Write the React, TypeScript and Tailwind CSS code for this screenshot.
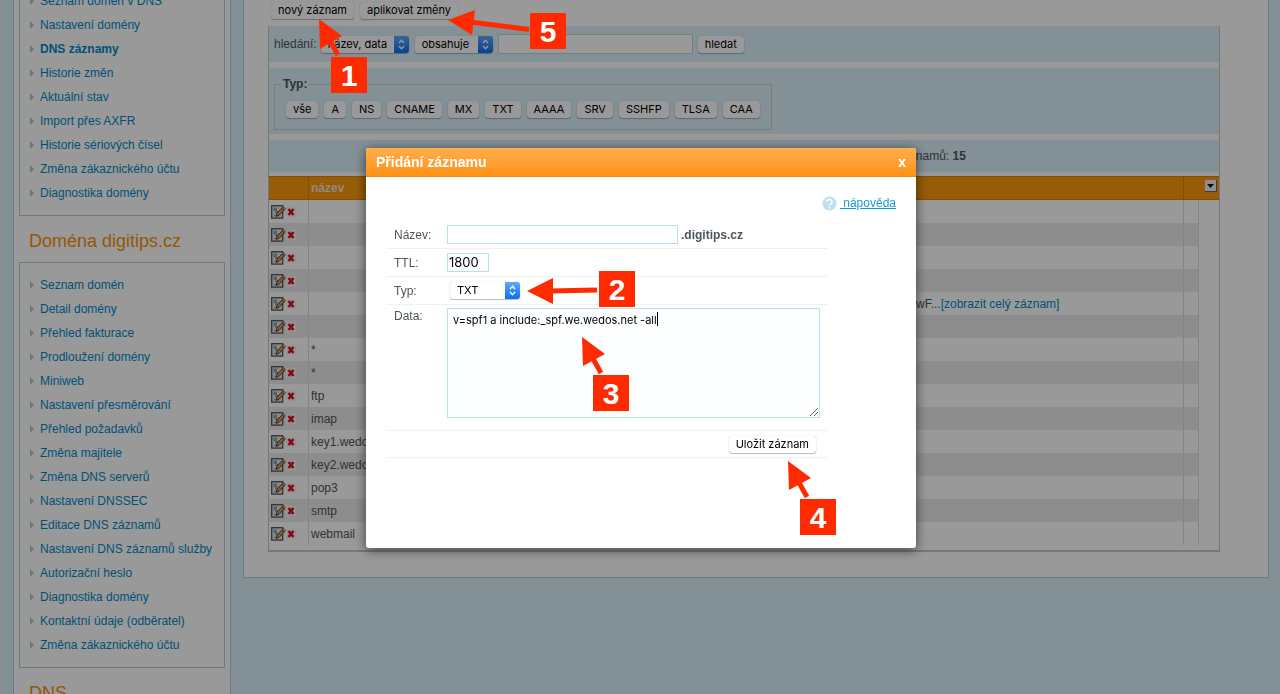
import type { ReactNode } from "react";

const dnsLinks = [
  "Seznam domén v DNS",
  "Nastavení domény",
  "DNS záznamy",
  "Historie změn",
  "Aktuální stav",
  "Import přes AXFR",
  "Historie sériových čísel",
  "Změna zákaznického účtu",
  "Diagnostika domény",
];

const domainLinks = [
  "Seznam domén",
  "Detail domény",
  "Přehled fakturace",
  "Prodloužení domény",
  "Miniweb",
  "Nastavení přesměrování",
  "Přehled požadavků",
  "Změna majitele",
  "Změna DNS serverů",
  "Nastavení DNSSEC",
  "Editace DNS záznamů",
  "Nastavení DNS záznamů služby",
  "Autorizační heslo",
  "Diagnostika domény",
  "Kontaktní údaje (odběratel)",
  "Změna zákaznického účtu",
];

const types = ["vše", "A", "NS", "CNAME", "MX", "TXT", "AAAA", "SRV", "SSHFP", "TLSA", "CAA"];

const records = ["", "", "", "", "", "", "*", "*", "ftp", "imap", "key1.wedos", "key2.wedos", "pop3", "smtp", "webmail"];

function Button({ children }: { children: ReactNode }) {
  return (
    <button className="h-[17px] rounded-[3px] bg-white px-[7px] font-['Inter',sans-serif] text-[11px] leading-[17px] whitespace-nowrap text-black shadow-[0_0_1px_rgba(0,0,0,0.3),0_1px_1px_rgba(0,0,0,0.25)]">
      {children}
    </button>
  );
}

function Select({ label, value, width }: { label: string; value: string; width: string }) {
  return (
    <span className={`relative inline-block h-[17px] ${width}`}>
      <select
        aria-label={label}
        className="block h-[17px] w-full appearance-none rounded-[3px] bg-white pl-[7px] font-['Inter',sans-serif] text-[11px] leading-[17px] text-black shadow-[0_0_1px_rgba(0,0,0,0.3),0_1px_1px_rgba(0,0,0,0.25)]"
      >
        <option>{value}</option>
      </select>
      <span className="pointer-events-none absolute inset-y-0 right-0 flex w-[15px] items-center justify-center rounded-r-[3px] bg-linear-to-b from-[#5aaaf8] to-[#0a6cf8]">
        <svg width="7" height="11" viewBox="0 0 7 11" fill="none" stroke="white" strokeWidth="1.3">
          <path d="M1 4l2.5-2.7L6 4M1 7l2.5 2.7L6 7" />
        </svg>
      </span>
    </span>
  );
}

function Menu({ items, active }: { items: string[]; active?: string }) {
  return (
    <ul className="border border-[#a9cfdf] py-[10px] pl-[10px]">
      {items.map((item) => (
        <li key={item} className="flex h-6 items-center gap-[6px]">
          <svg width="4" height="8" viewBox="0 0 4 8" fill="#a9c6d3">
            <path d="M0 0l4 4-4 4z" />
          </svg>
          <a href="#" className={item === active ? "font-bold text-[#0088c6]" : "text-[#0088c6]"}>
            {item}
          </a>
        </li>
      ))}
    </ul>
  );
}

function EditIcon() {
  return (
    <svg width="15" height="14" viewBox="0 0 15 14">
      <rect x="0.7" y="0.7" width="11" height="12.4" fill="#dfe4e6" stroke="#555" strokeWidth="1.3" />
      <path d="M2.500 2.500h3.500v3.500h2v2h-4v-2h-1.500z" fill="#8fa3ad" />
      <path d="M3 10.500h3" stroke="#9aa" />
      <path d="M5 11.500l1-3.500 5-5 2.200 2-5 5.200z" fill="#d09a5c" stroke="#4f3826" strokeWidth="0.9" />
      <path d="M10.800 3l2.400 2.200 1.300-1.600-2.200-2z" fill="#c99880" stroke="#5a4030" strokeWidth="0.6" />
    </svg>
  );
}

function DeleteIcon() {
  return (
    <svg width="10" height="10" viewBox="0 0 10 10">
      <rect width="10" height="10" fill="#fff5f0" />
      <path d="M2.500 2l5 6M7.500 2l-5 6" stroke="#cf1030" strokeWidth="2.600" />
    </svg>
  );
}

function Records() {
  return (
    <table className="w-full table-fixed border-separate border-spacing-0">
      <colgroup>
        <col className="w-[40px]" />
        <col />
        <col className="w-[268px]" />
        <col className="w-[15px]" />
        <col className="w-[20px]" />
      </colgroup>
      <thead>
        <tr className="h-6 bg-[#fa9a0e] text-left text-[12px] text-[#f5e6cf]">
          <th className="border-r border-y border-[#d98307]" aria-label="akce" />
          <th className="border-y border-[#d98307] px-[2px] leading-[22px]">název</th>
          <th className="border-r border-y border-[#d98307]" aria-label="data" />
          <th colSpan={2} className="border-y border-[#d98307] pr-[2px]">
            <button
              aria-label="sloupce"
              className="mb-1 ml-auto flex size-3 items-center justify-center border-r border-b border-[#666] bg-[#f0f0f0]"
            >
              <svg width="7" height="4" viewBox="0 0 7 4">
                <path d="M0 0h7L3.500 4z" fill="#000" />
              </svg>
            </button>
          </th>
        </tr>
      </thead>
      <tbody>
        {records.map((name, i) => (
          <tr key={i} className={i % 2 ? "h-[23px] bg-[#ececec]" : "h-[23px]"}>
            <td className="border-r border-[#dcdcdc] pl-[2px]">
              <div className="flex items-center">
                <EditIcon />
                <DeleteIcon />
              </div>
            </td>
            <td className="px-[2px] leading-[22px]">{name}</td>
            <td className="border-r border-[#dcdcdc] leading-[22px]">
              {i === 4 && (
                <>
                  wF...
                  <a href="#" className="text-[#0088c6]">
                    [zobrazit celý záznam]
                  </a>
                </>
              )}
            </td>
            <td className="border-r border-[#dcdcdc]" />
            <td className="bg-white" />
          </tr>
        ))}
      </tbody>
    </table>
  );
}

function AddRecord() {
  const field = "border border-[#b9dfe9] bg-[#fcfeff] text-black";
  const row = "flex border-b border-[#f0f0f0] pl-2";
  return (
    <div role="dialog" aria-labelledby="dialog-title" className="min-h-[400px] w-[550px] rounded-[3px] bg-white shadow-[0_2px_12px_rgba(0,0,0,0.6)]">
      <div className="flex h-[29px] items-center justify-between rounded-t-[3px] border-b border-[#e58a1c] bg-linear-to-b from-[#ffae4a] to-[#ff9210] px-[10px] text-[14px] font-bold text-white">
        <h2 id="dialog-title">Přidání záznamu</h2>
        <button aria-label="Zavřít">x</button>
      </div>
      <div className="px-5 pt-[18px]">
        <div className="flex h-4 items-center justify-end gap-[3px]">
          <svg width="15" height="15" viewBox="0 0 15 15">
            <circle cx="7.500" cy="7.500" r="7" fill="#bfdff0" />
            <path d="M5 5.800a2.500 2.300 0 1 1 3.700 2q-1.200.6-1.200 1.700M7.500 11v1.400" fill="none" stroke="white" strokeWidth="1.600" />
          </svg>
          <a href="#" className="text-[#1a98d5] underline">
            &nbsp;nápověda
          </a>
        </div>
        <form className="mt-[10px] w-[442px]">
          <div className={`${row} h-[28px] items-center`}>
            <label htmlFor="name" className="w-[53px]">Název:</label>
            <input id="name" className={`${field} h-[19px] w-[231px]`} />
            <b className="ml-[3px]">.digitips.cz</b>
          </div>
          <div className={`${row} h-[28px] items-center`}>
            <label htmlFor="ttl" className="w-[53px]">TTL:</label>
            <input id="ttl" defaultValue="1800" className={`${field} h-[19px] w-[42px] px-[1px] font-['Inter',sans-serif] text-[13px]`} />
          </div>
          <div className={`${row} h-[28px] items-center`}>
            <span className="w-[56px]">Typ:</span>
            <Select label="Typ" value="TXT" width="w-[70px]" />
          </div>
          <div className={`${row} h-[126px] pt-[3px]`}>
            <label htmlFor="data" className="w-[53px] leading-4">Data:</label>
            <div className="relative h-[110px] w-[373px]">
              <textarea
                id="data"
                defaultValue="v=spf1 a include:_spf.we.wedos.net -all"
                className={`${field} block size-full resize-none px-[5px] py-[3px] font-['Inter',sans-serif] text-[11px] leading-4`}
              />
              <span className="absolute top-1 left-[210px] h-[14px] w-px bg-black" />
              <svg className="absolute right-[2px] bottom-[2px]" width="8" height="8" viewBox="0 0 8 8" stroke="#666">
                <path d="M0 8l8-8M4 8l4-4" />
              </svg>
            </div>
          </div>
          <div className={`${row} h-[27px] items-center justify-end pr-3`}>
            <Button>Uložit záznam</Button>
          </div>
        </form>
      </div>
    </div>
  );
}

const marks = [
  { n: 1, pos: "left-[331px] top-[57px]" },
  { n: 2, pos: "left-[599px] top-[271px]" },
  { n: 3, pos: "left-[593px] top-[375px]" },
  { n: 4, pos: "left-[800px] top-[499px]" },
  { n: 5, pos: "left-[530px] top-[13px]" },
];

function Annotations() {
  return (
    <div className="pointer-events-none absolute top-0 left-0">
      <svg width="1280" height="694" viewBox="0 0 1280 694" fill="#ff2a00" stroke="#ff2a00">
        <path stroke="none" d="M319 19l23 17-22 13zM448 20l27-10-3 25zM527 291l26-13v26zM582 337l23 17-22 12zM788 461l23 17-22 12z" />
        <path strokeWidth="5" d="M328 37l10 18M470 22l59 7.500M550 291l47-1M591 355l10 18M797 479l10 18" />
      </svg>
      {marks.map(({ n, pos }) => (
        <span key={n} className={`absolute flex size-9 items-center justify-center bg-[#ff2a00] text-[30px] font-bold text-white ${pos}`}>
          {n}
        </span>
      ))}
    </div>
  );
}

export default function App() {
  return (
    <div className="relative h-screen overflow-hidden bg-[#daf1f9] font-['Liberation_Sans',Arial,sans-serif] text-[12px] text-[#4c565c]">
      <div className="flex h-full items-start gap-3 border-l border-[#eee] pr-[11px] pl-3">
        {/* left menu */}
        <aside className="w-[218px] shrink-0 border-x border-[#b4d2de] bg-white px-[5px]">
          <div className="-mt-[22px]">
            <Menu items={dnsLinks} active="DNS záznamy" />
          </div>
          <h2 className="h-[46px] pl-[10px] text-[18px] leading-[50px] text-[#f7920a]">Doména digitips.cz</h2>
          <Menu items={domainLinks} />
          <h2 className="h-[46px] pl-[10px] text-[18px] leading-[50px] text-[#f7920a]">DNS</h2>
        </aside>

        {/* records */}
        <main className="min-w-0 flex-1 border border-t-0 border-[#b4d2de] bg-white pt-[2px] pr-[48px] pb-[25px] pl-6">
          <div className="flex h-6 gap-[6px] pl-[3px]">
            <Button>nový záznam</Button>
            <Button>aplikovat změny</Button>
          </div>
          <div className="border-x border-b-2 border-[#c8c8c8]">
            <div className="flex h-9 items-center bg-[#daf1f9] pl-[5px]">
              <label htmlFor="search" className="mr-1">hledání:</label>
              <Select label="Sloupec" value="název, data" width="w-[88px]" />
              <span className="ml-[6px]">
                <Select label="Podmínka" value="obsahuje" width="w-[78px]" />
              </span>
              <input id="search" className="mr-[5px] ml-[5px] h-5 w-[195px] border border-[#c8d2d6] bg-white" />
              <Button>hledat</Button>
            </div>
            <div className="mt-[6px] flex h-[66px] bg-[#daf1f9] pt-2 pl-[5px]">
              <fieldset className="h-[54px] border border-[#c9cfd2] px-[11px]">
                <legend className="-ml-[5px] px-[2px] font-bold leading-4">Typ:</legend>
                <div className="mt-[9px] flex gap-[6px]">
                  {types.map((type) => (
                    <Button key={type}>{type}</Button>
                  ))}
                </div>
              </fieldset>
            </div>
            <div className="mt-[6px] mb-[4px] flex h-8 items-center justify-center bg-[#daf1f9] pl-[375px]">
              <span>
                záznamů: <b>15</b>
              </span>
            </div>
            <Records />
            <div className="h-[5px]" />
          </div>
        </main>
      </div>

      <div className="fixed inset-0 flex items-center justify-center bg-black/40 pt-[2px] pl-[2px]">
        <AddRecord />
      </div>
      <Annotations />
    </div>
  );
}
